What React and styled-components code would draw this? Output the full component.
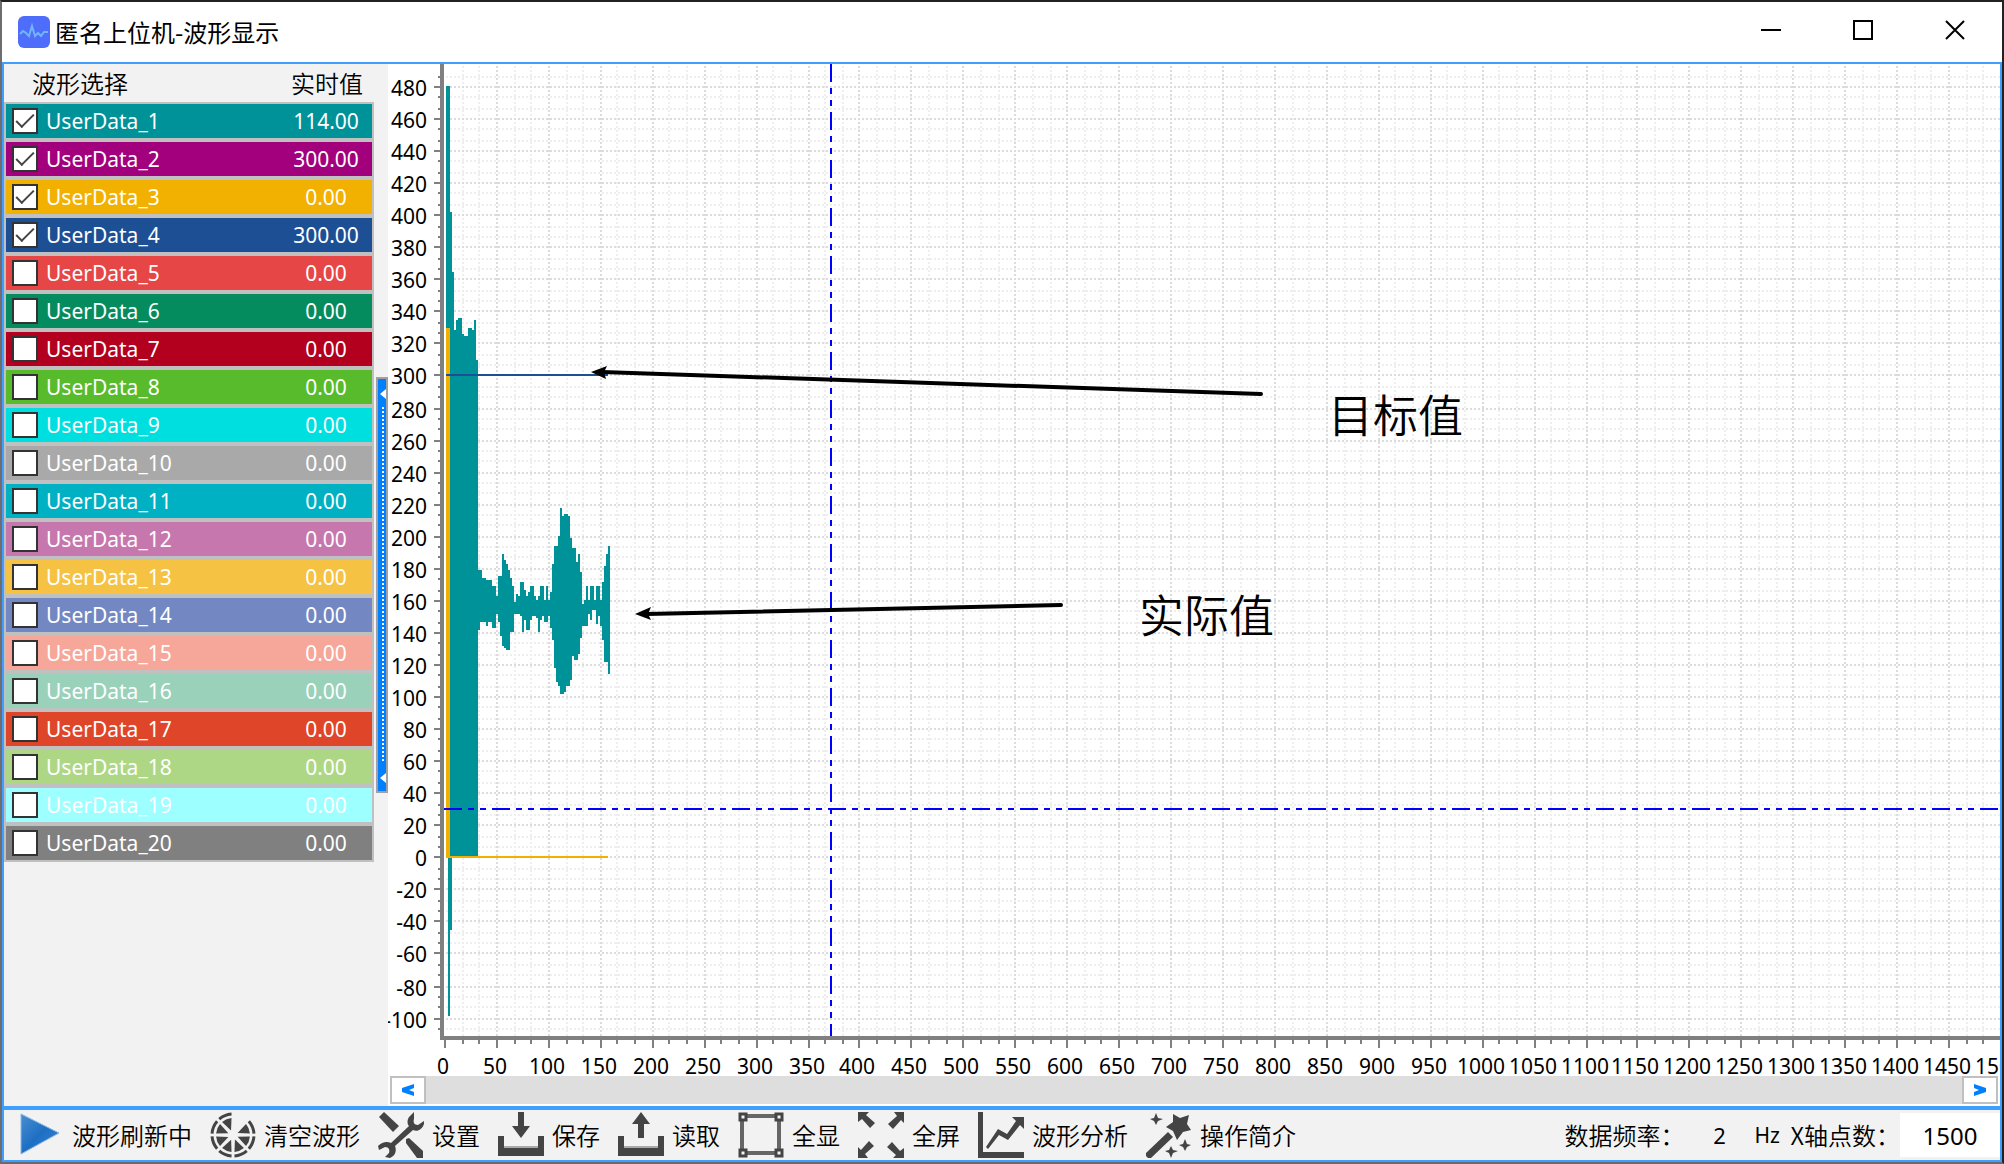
import React, { useState } from "react";
import styled, { createGlobalStyle } from "styled-components";

const BLUE = "#409eff";
const TEAL = "#009299";
const LATIN = '"Noto Sans", "Noto Sans CJK SC", sans-serif';
const CJK = '"Noto Sans CJK SC", "Noto Sans", sans-serif';

const Global = createGlobalStyle`
  *, *::before, *::after { box-sizing: border-box; }
  body { margin: 0; background: #222; font-family: ${LATIN}; color: #000; }
  button, input { font: inherit; color: inherit; }
`;

/* ---------- window frame ---------- */

const Desktop = styled.div`
  height: 100vh;
  display: flex;
  flex-direction: column;
  border: 2px solid #222;
  border-left-color: #6f6c6f;
  border-bottom-color: #6a6a6c;
`;

const TitleBar = styled.header`
  height: 60px;
  flex: none;
  display: flex;
  align-items: center;
  padding: 0 1px 0 16px;
  gap: 5px;
  background: #fff;
`;

const AppTitle = styled.h1`
  margin: 0;
  flex: 1;
  font: 400 24px/32px ${CJK};
`;

const CaptionButtons = styled.div`
  display: flex;
  align-self: stretch;
  padding-bottom: 4px;
`;

const CaptionButton = styled.button`
  width: 92px;
  padding: 0;
  border: 0;
  background: transparent;
  display: grid;
  place-items: center;
`;

const Body = styled.div`
  flex: 1;
  min-height: 0;
  display: flex;
  flex-direction: column;
  border: 2px solid ${BLUE};
  background: #f2f2f2;
`;

const Main = styled.main`
  flex: 1;
  min-height: 0;
  display: flex;
`;

/* ---------- channel list ---------- */

const SidePanel = styled.aside`
  flex: none;
  display: flex;
  gap: 2px;
`;

const ChannelTable = styled.table`
  align-self: flex-start;
  width: 370px;
  border-spacing: 0;
  table-layout: fixed;
`;

const HeadCell = styled.th`
  height: 38px;
  padding: 0 0 0 ${(p) => (p.$value ? "0" : "28px")};
  width: ${(p) => (p.$value ? "94px" : "auto")};
  text-align: ${(p) => (p.$value ? "center" : "left")};
  font: 350 24px/32px ${CJK};
  white-space: nowrap;
`;

const ChannelRow = styled.tr`
  background: ${(p) => p.$color};
  color: #fff;
`;

const NameCell = styled.td`
  height: 38px;
  padding: 0 0 0 6px;
  border: solid #c0c0c0;
  border-width: 2px 0 2px 2px;
`;

const ValueCell = styled.td`
  padding: 0;
  border: solid #c0c0c0;
  border-width: 2px 2px 2px 0;
  text-align: center;
  font-size: 21px;
  line-height: 30px;
`;

const ChannelLabel = styled.label`
  display: flex;
  align-items: center;
  gap: 8px;
  font-size: 21px;
  line-height: 30px;
`;

const Check = styled.input`
  appearance: none;
  width: 26px;
  height: 26px;
  margin: 0;
  flex: none;
  display: grid;
  place-items: center;
  background: #fff;
  border: 2px solid #333;

  &:checked::before {
    content: "";
    width: 18px;
    height: 9px;
    margin-bottom: 6px;
    border: solid #444;
    border-width: 0 0 2px 2px;
    transform: rotate(-45deg);
  }
`;

const Splitter = styled.button`
  align-self: center;
  width: 12px;
  height: 416px;
  padding: 0;
  border: 2px solid #a0a0a0;
  background: #0080ff;
  display: flex;
`;

/* ---------- chart ---------- */

const Chart = styled.section`
  flex: 1;
  min-width: 0;
  overflow: hidden;
  display: grid;
  grid-template: minmax(0, 1fr) 40px 30px / 56px minmax(0, 1fr);
  background: #fff;
`;

const Drawing = styled.svg`
  display: block;
  width: 100%;
  height: 100%;
  overflow: ${(p) => (p.$open ? "visible" : "hidden")};
  grid-column: ${(p) => (p.$wide ? "1 / -1" : "auto")};
`;

const Tick = styled.text`
  font: 400 21px ${LATIN};
  text-anchor: ${(p) => p.$anchor};
`;

const Note = styled.text`
  font: 350 45px ${CJK};
`;

const ScrollBar = styled.div`
  grid-column: 1 / -1;
  height: 28px;
  margin: 0 2px;
  display: flex;
  justify-content: space-between;
  background: #dedede;
`;

const ScrollButton = styled.button`
  width: 36px;
  padding: 0;
  border: 2px solid #c0c0c0;
  background: #fff;
  display: grid;
  place-items: center;
`;

/* ---------- bottom bar ---------- */

const ToolBar = styled.footer`
  flex: none;
  height: 54px;
  display: flex;
  align-items: center;
  gap: 18px;
  padding-left: 14px;
  border-top: 4px solid ${BLUE};
  font: 350 24px/32px ${CJK};
  white-space: nowrap;
`;

const Tool = styled.button`
  padding: 0;
  border: 0;
  background: transparent;
  display: flex;
  align-items: center;
  gap: 8px;
`;

const Settings = styled.div`
  margin-left: auto;
  align-self: stretch;
  display: flex;
  align-items: center;
`;

const Rate = styled.output`
  width: 70px;
  text-align: center;
  font: 400 22px/32px ${LATIN};
`;

const Unit = styled.span`
  width: 36px;
  font: 400 21px/32px ${LATIN};
`;

const PointsInput = styled.input`
  width: 100px;
  height: 44px;
  padding: 0;
  border: 0;
  background: #fff;
  text-align: center;
  font: 400 24px/32px ${LATIN};
`;

/* ---------- data ---------- */

const CHANNELS = [
  ["#009299", "114.00"], ["#a2007c", "300.00"], ["#f2b100", "0.00"], ["#1c4f94", "300.00"],
  ["#e64646", "0.00"], ["#048c5e", "0.00"], ["#b3001e", "0.00"], ["#58bb2b", "0.00"],
  ["#00dfdf", "0.00"], ["#a9a9a9", "0.00"], ["#00b1c4", "0.00"], ["#c677ad", "0.00"],
  ["#f5c244", "0.00"], ["#7388c2", "0.00"], ["#f6a79a", "0.00"], ["#99d1ba", "0.00"],
  ["#df4528", "0.00"], ["#aed785", "0.00"], ["#9dffff", "0.00"], ["#808080", "0.00"],
];

// Axis positions snap to the 2px cell grid; one step is 20 units on Y and 50 on X.
const yAt = (step) => 2 * Math.round(396.3056 - 16.0556 * step) + 1;
const xAt = (step) => 2 * Math.round(25.9333 * step) + 1;

const yTicks = [];
for (let i = -16; i <= 73; i++) {
  yTicks.push({ y: yAt(i / 3), major: i % 3 === 0, label: (i / 3) * 20 });
}
const xTicks = [];
for (let i = 0; i <= 90; i++) {
  xTicks.push({ x: xAt(i / 3), major: i % 3 === 0, label: (i / 3) * 50 });
}

// Settling burst at the start of the trace: x, y, width, height.
const BURST = [
  [2, 22, 4, 771], [6, 148, 2, 645], [8, 208, 2, 585], [10, 266, 2, 527], [12, 256, 2, 537],
  [14, 254, 4, 539], [18, 270, 2, 523], [20, 272, 4, 521], [24, 264, 4, 529], [28, 266, 2, 527],
  [30, 256, 2, 537], [32, 296, 2, 497], [4, 793, 2, 159], [6, 793, 2, 73],
];

// Upper and lower bound of the trace for each 2px column after the burst.
const ENVELOPE = [
  [120, 150], [120, 146], [124, 146], [124, 146], [125, 148], [125, 146], [125, 146], [128, 149],
  [128, 149], [133, 142], [123, 146], [123, 153], [112, 158], [115, 159], [117, 160], [120, 160],
  [124, 151], [128, 151], [136, 142], [132, 142], [133, 142], [126, 143], [126, 151], [130, 145],
  [133, 150], [131, 150], [128, 145], [128, 143], [133, 143], [135, 144], [133, 151], [128, 145],
  [128, 143], [135, 146], [128, 146], [135, 143], [131, 149], [117, 155], [108, 169], [108, 176],
  [103, 178], [89, 182], [93, 182], [92, 181], [92, 178], [93, 178], [104, 175], [109, 163],
  [109, 165], [116, 165], [112, 162], [121, 154], [137, 148], [135, 148], [128, 148], [135, 142],
  [128, 145], [128, 140], [135, 140], [128, 147], [128, 143], [135, 148], [126, 155], [118, 166],
  [112, 166], [108, 172],
];

/* ---------- chart parts ---------- */

function YAxis() {
  return (
    <Drawing $open aria-hidden="true">
      <rect x="52" y="0" width="4" height="100%" fill="#808080" />
      {yTicks.map((t) => (
        <React.Fragment key={t.y}>
          <rect x={t.major ? 46 : 50} y={t.y - 1} width={t.major ? 6 : 2} height="2" fill="#808080" />
          {t.major && <Tick $anchor="end" x="39" y={t.y + 9}>{Math.round(t.label)}</Tick>}
        </React.Fragment>
      ))}
    </Drawing>
  );
}

function XAxis() {
  return (
    <Drawing $wide $open aria-hidden="true">
      <rect x="52" y="0" width="100%" height="4" fill="#808080" />
      {xTicks.map((t) => (
        <React.Fragment key={t.x}>
          <rect x={t.x + 55} y="4" width="2" height={t.major ? 8 : 4} fill="#808080" />
          {t.major && <Tick $anchor="middle" x={t.x + 54} y="38">{Math.round(t.label)}</Tick>}
        </React.Fragment>
      ))}
    </Drawing>
  );
}

function Plot() {
  const grid = (major) => (
    <g stroke={major ? "#dcdcdc" : "#eeeeee"} strokeWidth="2" strokeDasharray="2 2">
      {yTicks.filter((t) => t.major === major).map((t) => (
        <line key={t.y} x1="2" x2="100%" y1={t.y} y2={t.y} />
      ))}
      {xTicks.filter((t) => t.major === major && t.x > 2).map((t) => (
        <line key={t.x} x1={t.x} x2={t.x} y1="2" y2="100%" />
      ))}
    </g>
  );
  return (
    <Drawing role="img" aria-label="波形显示">
      {grid(false)}
      {grid(true)}
      <g fill={TEAL} shapeRendering="crispEdges">
        {BURST.map(([x, y, w, h]) => (
          <rect key={`${x}-${y}`} x={x} y={y} width={w} height={h} />
        ))}
        {ENVELOPE.map(([top, bottom], i) => (
          <rect key={i} x={34 + i * 2} y={266 + top * 2} width="2" height={(bottom - top) * 2} />
        ))}
      </g>
      <path d="M2 264h4v528h158v2H2z" fill="#f2b100" />
      <rect x="2" y="310" width="162" height="2" fill="#1c4f94" />
      <g stroke="#0000ff" strokeWidth="2" strokeDasharray="18 6 6 6 6 6">
        <line x1="0" x2="100%" y1="745" y2="745" />
        <line x1="387" x2="387" y1="0" y2="100%" />
      </g>
      <g stroke="#000" strokeWidth="4" strokeLinecap="round">
        <line x1="158" y1="308" x2="817" y2="330" />
        <line x1="202" y1="550" x2="617" y2="541" />
      </g>
      <path d="M147 308l16-6-3 6 2 7zM191 550l16-7-3 7 3 6z" />
      <Note x="884" y="369">目标值</Note>
      <Note x="695" y="569">实际值</Note>
    </Drawing>
  );
}

/* ---------- icons ---------- */

const Icon = ({ children }) => (
  <svg width="46" height="46" viewBox="0 0 46 46" fill="#444" aria-hidden="true">{children}</svg>
);

const polar = (r, deg) => {
  const a = (deg * Math.PI) / 180;
  return `${23 + r * Math.sin(a)} ${23 - r * Math.cos(a)}`;
};

const ICONS = {
  play: (
    <Icon>
      <defs>
        <linearGradient id="play" x1="0" y1="0" x2="1" y2="1">
          <stop offset="0" stopColor="#4a8fd0" />
          <stop offset=".5" stopColor="#1e6fc4" />
          <stop offset="1" stopColor="#3a86d0" />
        </linearGradient>
      </defs>
      <path d="M3 2l38 19L3 42z" fill="url(#play)" stroke="#8db8e2" />
    </Icon>
  ),
  clear: (
    <Icon>
      {[45, 90, 135, 180, 225, 270, 315].map((s) => (
        <React.Fragment key={s}>
          <path d={`M${polar(5, s + 22)}L${polar(17, s + 5)}A17 17 0 0 1 ${polar(17, s + 40)}z`} />
          <path d={`M${polar(21, s + 4)}A21 21 0 0 1 ${polar(21, s + 41)}`} fill="none" stroke="#444" strokeWidth="3" />
        </React.Fragment>
      ))}
    </Icon>
  ),
  settings: (
    <Icon>
      <path d="M1 5l5-5 15 14-6 6z" />
      <path d="M28 27l3-1 14 13v7h-6L28 31z" />
      <path d="M36 0l-5 5c-2 3-2 7 0 9L13 31c-4-2-9-1-13 3l1 4 6-3c4 0 5 3 4 6l-4 4 5 1c5-2 7-7 5-12l18-16c4 2 9 0 11-6V9l-6 4c-4 0-5-3-4-6z" />
    </Icon>
  ),
  save: (
    <Icon>
      <path d="M20 0h6v14h6l-9 12-9-12h6zM0 24h6v12h34V24h6v20H0z" />
      <path d="M6 34h34v2H6z" fill="#aaa" />
    </Icon>
  ),
  load: (
    <Icon>
      <path d="M23 0l9 12h-6v14h-6V12h-6zM0 24h6v12h34V24h6v20H0z" />
      <path d="M6 34h34v2H6z" fill="#aaa" />
    </Icon>
  ),
  fit: (
    <Icon>
      <g fill="none" stroke="#666" strokeWidth="4">
        <path d="M4 4h37v37H4z" />
      </g>
      <g fill="#f2f2f2" stroke="#444" strokeWidth="3">
        <path d="M2 2h6v6H2zM38 2h6v6h-6zM2 38h6v6H2zM38 38h6v6h-6z" />
      </g>
    </Icon>
  ),
  full: (
    <Icon>
      {[0, 90, 180, 270].map((r) => (
        <path key={r} d="M0 0h11L8 3l9 8-5 5-8-9-4 3z" transform={`rotate(${r} 23 23)`} />
      ))}
    </Icon>
  ),
  analyse: (
    <Icon>
      <path d="M0 0h5v40h41v6H0z" />
      <path d="M34 5h12v12l-4-4-12 15-9-5L10 37l-2-2L20 17l9 5 9-13z" />
    </Icon>
  ),
  help: (
    <Icon>
      <path d="M0 41l22-21 5 5L5 46H2l-2-2z" />
      <path d="M27 2l7 4 9-3-2 9 4 6-8 2-6 8-4-9-7-4 7-5z" />
      <path d="M10 1l2 5 5 1-5 2-2 4-2-4-4-2 4-1zM25 34l2 4 5 1-5 2-2 5-2-5-4-2 4-1zM39 27l2 5 4 1-4 2-2 4-2-4-4-2 4-1z" />
    </Icon>
  ),
};

const TOOLS = [
  ["play", "波形刷新中"],
  ["clear", "清空波形"],
  ["settings", "设置"],
  ["save", "保存"],
  ["load", "读取"],
  ["fit", "全显"],
  ["full", "全屏"],
  ["analyse", "波形分析"],
  ["help", "操作简介"],
];

const Logo = () => (
  <svg width="32" height="32" viewBox="0 0 32 32" aria-hidden="true">
    <rect width="32" height="32" rx="6" fill="#4d6dfa" />
    <path d="M2 18l3-3 3 2 3 3 3-10 3 10 3-3 3 3 3-4h4" fill="none" stroke="#74b4ff" strokeWidth="2" />
  </svg>
);

/* ---------- page ---------- */

export default function App() {
  const [checked, setChecked] = useState(() => CHANNELS.map((_, i) => i < 4));
  const [points, setPoints] = useState("1500");
  const toggle = (index) => setChecked((list) => list.map((v, i) => (i === index ? !v : v)));

  return (
    <Desktop>
      <Global />
      <TitleBar>
        <Logo />
        <AppTitle>匿名上位机-波形显示</AppTitle>
        <CaptionButtons>
          <CaptionButton aria-label="最小化">
            <svg width="20" height="20"><path d="M0 9h20v2H0z" /></svg>
          </CaptionButton>
          <CaptionButton aria-label="最大化">
            <svg width="20" height="20"><path d="M1 1h18v18H1z" fill="none" stroke="#000" strokeWidth="2" /></svg>
          </CaptionButton>
          <CaptionButton aria-label="关闭">
            <svg width="20" height="20"><path d="M1 1l18 18M19 1L1 19" stroke="#000" strokeWidth="2" /></svg>
          </CaptionButton>
        </CaptionButtons>
      </TitleBar>

      <Body>
        <Main>
          <SidePanel>
            <ChannelTable>
              <thead>
                <tr>
                  <HeadCell>波形选择</HeadCell>
                  <HeadCell $value>实时值</HeadCell>
                </tr>
              </thead>
              <tbody>
                {CHANNELS.map(([color, value], i) => (
                  <ChannelRow key={i} $color={color}>
                    <NameCell>
                      <ChannelLabel>
                        <Check type="checkbox" checked={checked[i]} onChange={() => toggle(i)} />
                        {`UserData_${i + 1}`}
                      </ChannelLabel>
                    </NameCell>
                    <ValueCell>{value}</ValueCell>
                  </ChannelRow>
                ))}
              </tbody>
            </ChannelTable>
            <Splitter aria-label="收起列表">
              <svg width="8" height="412" fill="#fff" aria-hidden="true">
                <path d="M2 15l6-5v10zM2 399l6-5v10z" />
                <path d="M5 28v356" stroke="#fff" strokeWidth="2" strokeDasharray="2 2" />
              </svg>
            </Splitter>
          </SidePanel>

          <Chart>
            <YAxis />
            <Plot />
            <XAxis />
            <ScrollBar>
              <ScrollButton aria-label="向左滚动">
                <svg width="12" height="12" fill="#0080ff"><path d="M12 0v4L7 6l5 2v4L0 8V4z" /></svg>
              </ScrollButton>
              <ScrollButton aria-label="向右滚动">
                <svg width="12" height="12" fill="#0080ff"><path d="M0 0v4l5 2-5 2v4l12-4V4z" /></svg>
              </ScrollButton>
            </ScrollBar>
          </Chart>
        </Main>

        <ToolBar>
          {TOOLS.map(([icon, label]) => (
            <Tool key={icon}>
              {ICONS[icon]}
              {label}
            </Tool>
          ))}
          <Settings>
            <span>数据频率：</span>
            <Rate>2</Rate>
            <Unit>Hz</Unit>
            <label htmlFor="points">X轴点数：</label>
            <PointsInput id="points" value={points} onChange={(e) => setPoints(e.target.value)} />
          </Settings>
        </ToolBar>
      </Body>
    </Desktop>
  );
}
